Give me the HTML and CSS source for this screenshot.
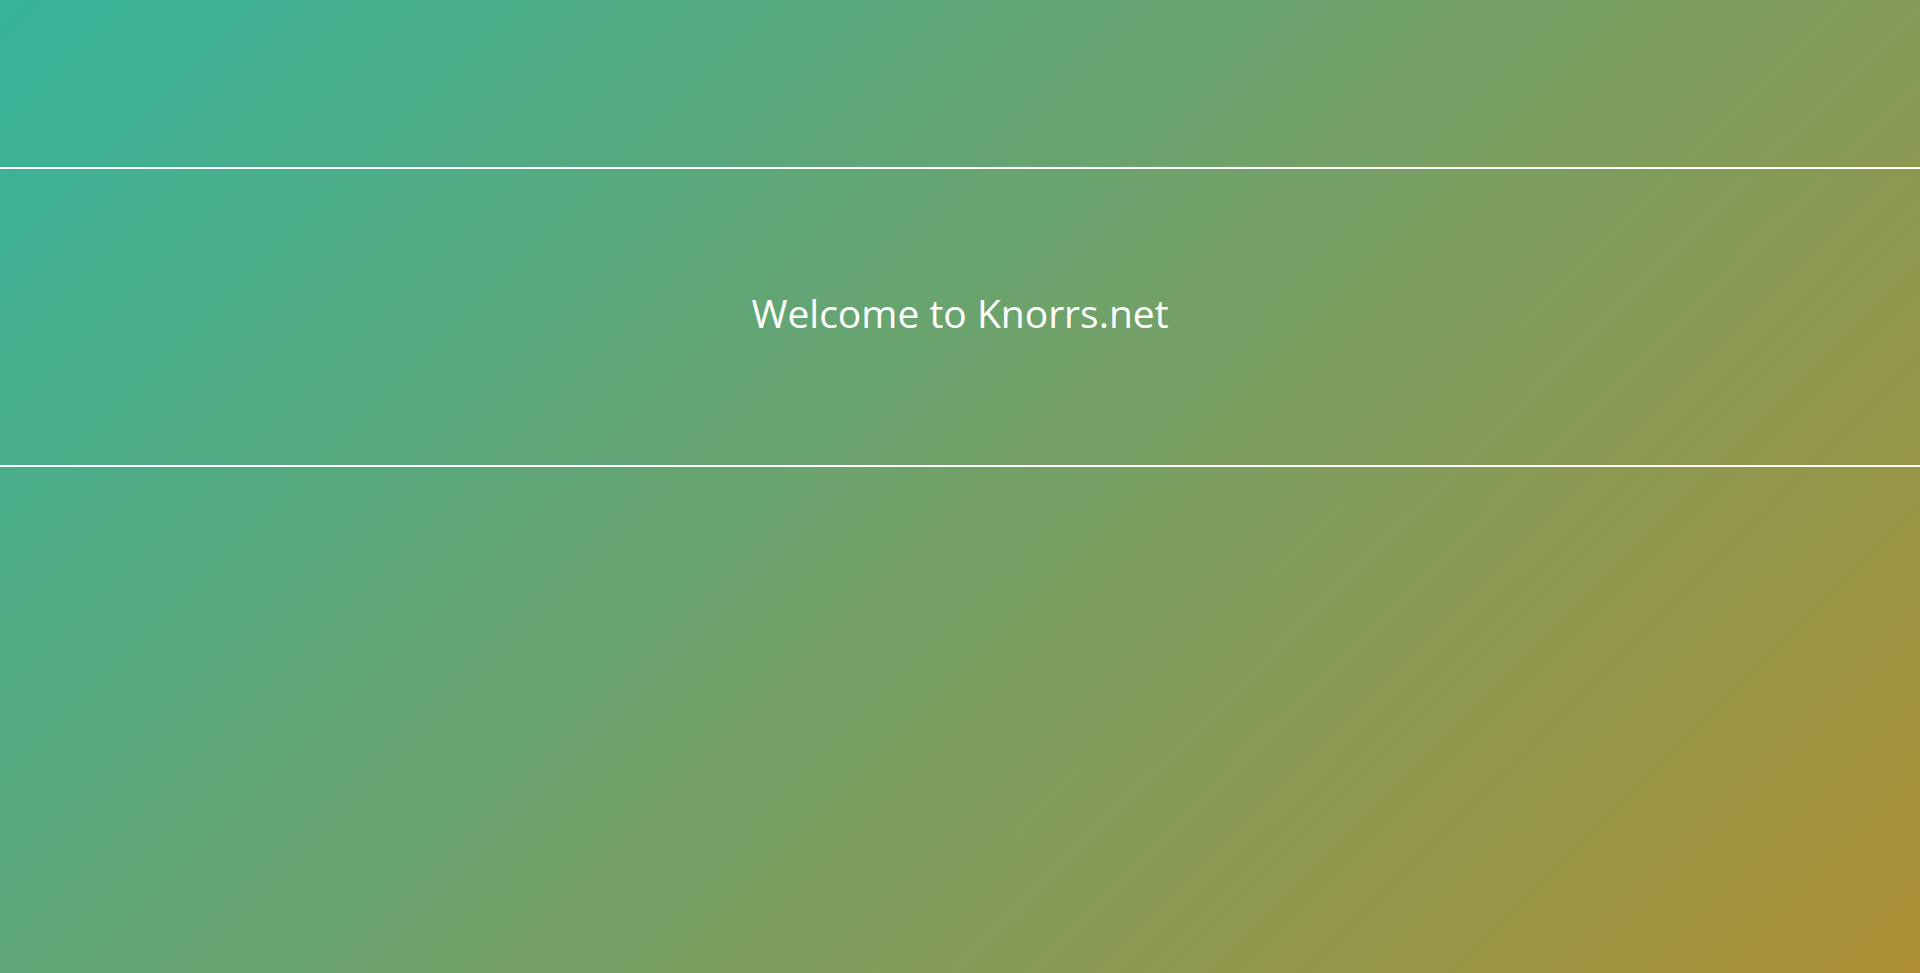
FILE: index.html
```html
<!DOCTYPE html>
<html lang="en">
<head>
<meta charset="utf-8">
<title>Knorrs.net</title>
<link rel="stylesheet" href="styles.css">
</head>
<body>
<div class="page">
  <div class="top"></div>
  <header class="banner">
    <h1 class="title">Welcome to Knorrs.net</h1>
  </header>
  <main class="rest"></main>
</div>
</body>
</html>
```
FILE: styles.css
```css
html, body {
  margin: 0;
  padding: 0;
  height: 100%;
}
body {
  background: linear-gradient(135deg, #36b39b 0%, #ad8f35 100%);
  font-family: "Open Sans", "Noto Sans", sans-serif;
  color: #fff;
  overflow: hidden;
}
.page {
  display: flex;
  flex-direction: column;
  height: 100%;
}
.top {
  height: 167px;
}
.banner {
  height: 296px;
  box-sizing: content-box;
  border-top: 2px solid #fff;
  border-bottom: 2px solid #fff;
  display: flex;
  align-items: center;
  justify-content: center;
}
.title {
  margin: 0 0 10px;
  font-weight: 400;
  font-size: 39px;
  line-height: 1;
  letter-spacing: 0;
}
.rest {
  flex: 1;
}
```
